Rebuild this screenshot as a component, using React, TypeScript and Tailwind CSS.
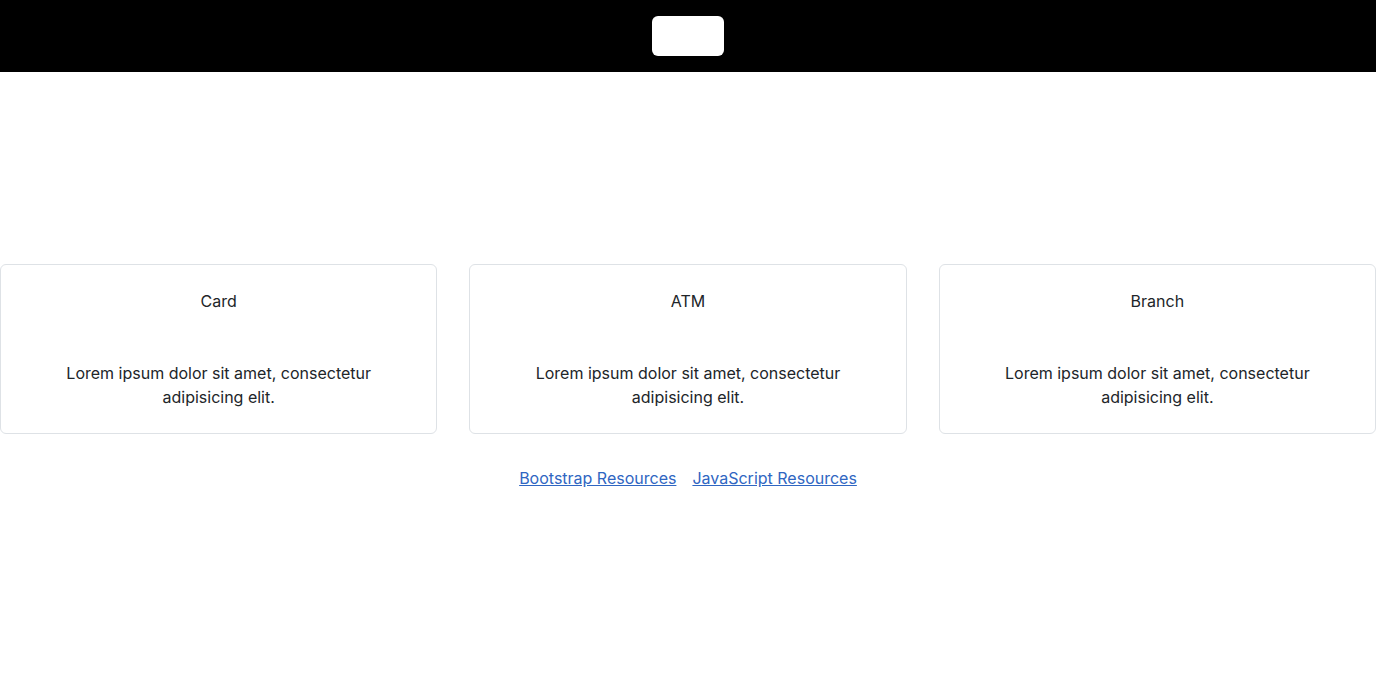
export default function App() {
  const cards = ["Card", "ATM", "Branch"];
  return (
    <div className="min-h-screen bg-white text-[#212529]" style={{ fontFamily: "Inter, 'Liberation Sans', sans-serif" }}>
      <header className="h-[72px] bg-black flex items-center justify-center">
        <div className="w-[72px] h-[40px] bg-white rounded-[6px]" />
      </header>
      <main className="pt-[192px]">
        <div className="grid grid-cols-3 gap-8">
          {cards.map((c) => (
            <div key={c} className="border border-[#dee2e6] rounded-[6px] h-[170px] px-12 pt-6 text-center text-base leading-6">
              <h5 className="text-base leading-6 font-normal">{c}</h5>
              <p className="mt-12">Lorem ipsum dolor sit amet, consectetur adipisicing elit.</p>
            </div>
          ))}
        </div>
        <div className="mt-8 flex justify-center gap-4 text-base leading-6">
          <a href="#" className="text-[#2f66c2] underline">Bootstrap Resources</a>
          <a href="#" className="text-[#2f66c2] underline">JavaScript Resources</a>
        </div>
      </main>
    </div>
  );
}
